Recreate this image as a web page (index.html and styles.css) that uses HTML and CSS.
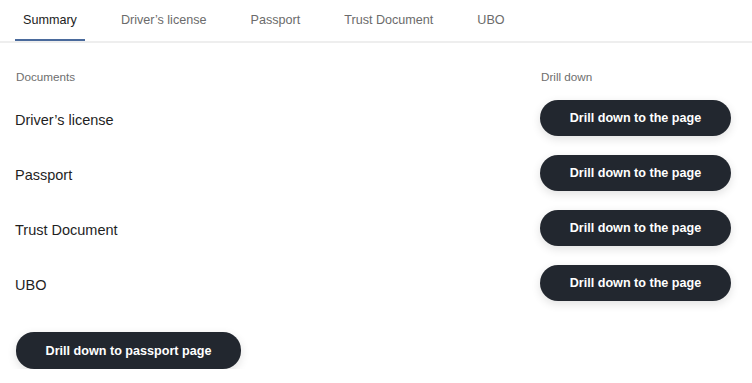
FILE: index.html
```html
<!DOCTYPE html>
<html>
<head>
<meta charset="utf-8">
<link rel="stylesheet" href="styles.css">
</head>
<body>
<nav class="tabs">
  <a class="tab active">Summary</a>
  <a class="tab">Driver’s license</a>
  <a class="tab">Passport</a>
  <a class="tab">Trust Document</a>
  <a class="tab">UBO</a>
</nav>
<main class="content">
  <div class="table">
    <div class="head">Documents</div>
    <div class="head">Drill down</div>
    <div class="doc">Driver’s license</div>
    <div class="cell"><button class="btn">Drill down to the page</button></div>
    <div class="doc">Passport</div>
    <div class="cell"><button class="btn">Drill down to the page</button></div>
    <div class="doc">Trust Document</div>
    <div class="cell"><button class="btn">Drill down to the page</button></div>
    <div class="doc">UBO</div>
    <div class="cell"><button class="btn">Drill down to the page</button></div>
  </div>
  <button class="btn btn-wide">Drill down to passport page</button>
</main>
</body>
</html>
```
FILE: styles.css
```css
* { box-sizing: border-box; }
body {
  margin: 0;
  font-family: "Liberation Sans", Arial, sans-serif;
  background: #fff;
  color: #222;
}
.tabs {
  display: flex;
  gap: 28px;
  padding-left: 15px;
  border-bottom: 2px solid #eeeeee;
  height: 43px;
}
.tab {
  padding: 0 8px;
  height: 41px;
  line-height: 41px;
  font-size: 12.6px;
  color: #6b6b6b;
  border-bottom: 2px solid transparent;
}
.tab.active {
  color: #222;
  border-bottom-color: #4a6a9c;
}
.content {
  padding: 0 16px 0 15px;
}
.table {
  display: grid;
  grid-template-columns: 525px 1fr;
  padding-top: 27px;
}
.head {
  font-size: 11.7px;
  color: #6e6e6e;
  height: 14px;
  line-height: 14px;
  margin-bottom: 6px;
}
.head:first-child { padding-left: 1px; }
.head + .head { padding-left: 1px; }
.doc {
  font-size: 14.5px;
  color: #1f1f1f;
  height: 55px;
  display: flex;
  align-items: center;
  padding-top: 4px;
}
.cell {
  height: 55px;
  display: flex;
  align-items: center;
}
.btn {
  font-family: "Liberation Sans", Arial, sans-serif;
  font-weight: bold;
  font-size: 12.6px;
  color: #fff;
  background: #22272f;
  border: none;
  border-radius: 18px;
  height: 36px;
  width: 191px;
  box-shadow: 0 3px 10px rgba(0, 0, 0, 0.12);
  padding: 0;
}
.btn-wide {
  width: 225px;
  height: 37px;
  margin-top: 22px;
  margin-left: 1px;
}
```
